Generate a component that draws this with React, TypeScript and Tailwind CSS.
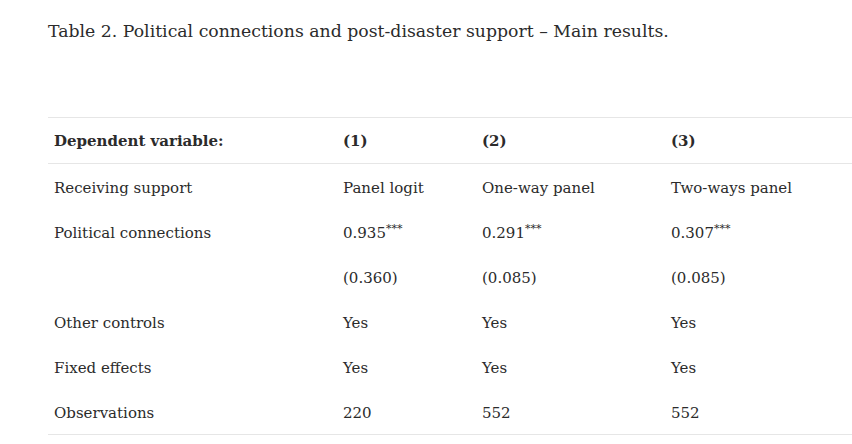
const rows: { label: string; cells: string[]; stars?: boolean }[] = [
  { label: 'Receiving support', cells: ['Panel logit', 'One-way panel', 'Two-ways panel'] },
  { label: 'Political connections', cells: ['0.935', '0.291', '0.307'], stars: true },
  { label: '', cells: ['(0.360)', '(0.085)', '(0.085)'] },
  { label: 'Other controls', cells: ['Yes', 'Yes', 'Yes'] },
  { label: 'Fixed effects', cells: ['Yes', 'Yes', 'Yes'] },
  { label: 'Observations', cells: ['220', '552', '552'] },
];

export default function App() {
  return (
    <div className="w-[852px] h-[444px] overflow-hidden bg-white text-[#2b2b2b] font-['DejaVu_Serif',serif]">
      <p className="pl-12 pt-[19px] text-[17.3px] leading-6">
        Table 2. Political connections and post-disaster support – Main results.
      </p>
      <div className="pl-12 mt-[74px]">
        <table className="w-full border-collapse text-[15px] table-fixed">
          <colgroup>
            <col className="w-[289px]" />
            <col className="w-[139px]" />
            <col className="w-[189px]" />
            <col />
          </colgroup>
          <thead>
            <tr className="border-y border-[#e6e6e6] h-[46px]">
              <th className="text-left font-bold pl-1.5 pt-0.5">Dependent variable:</th>
              <th className="text-left font-bold pl-1.5 pt-0.5">(1)</th>
              <th className="text-left font-bold pl-1.5 pt-0.5">(2)</th>
              <th className="text-left font-bold pl-1.5 pt-0.5">(3)</th>
            </tr>
          </thead>
          <tbody>
            {rows.map((r, i) => {
              const last = i === rows.length - 1;
              return (
                <tr key={i} className={last ? 'h-[46px] border-b border-[#e6e6e6]' : 'h-[45px]'}>
                  <td className="pl-1.5 pt-1">{r.label}</td>
                  {r.cells.map((c, j) => (
                    <td key={j} className="pl-1.5 pt-1">
                      {c}
                      {r.stars && <sup className="text-[11px] top-[-0.55em]">***</sup>}
                    </td>
                  ))}
                </tr>
              );
            })}
          </tbody>
        </table>
      </div>
    </div>
  );
}
